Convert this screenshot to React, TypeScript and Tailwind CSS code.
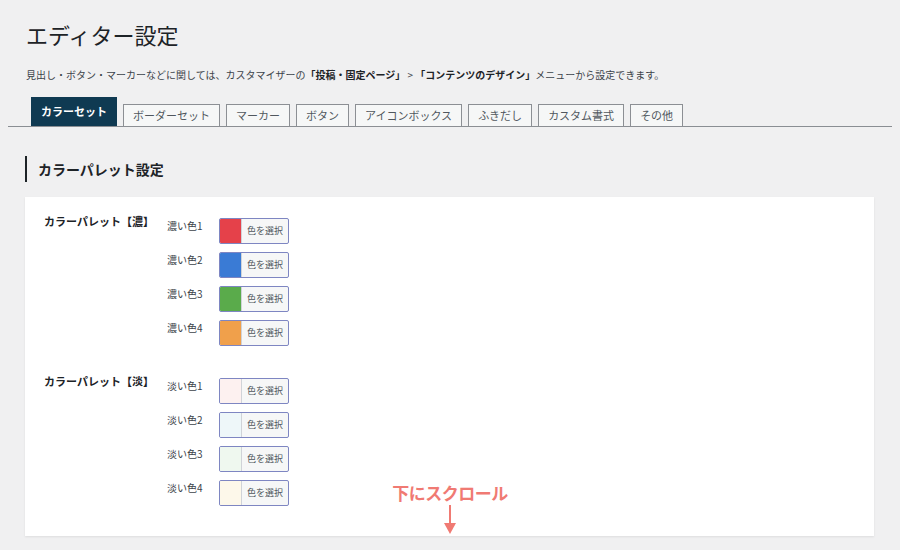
import React from "react";

const tabs = ["ボーダーセット", "マーカー", "ボタン", "アイコンボックス", "ふきだし", "カスタム書式", "その他"];

const dark = [
  { label: "濃い色1", color: "#e5414a" },
  { label: "濃い色2", color: "#3a7bd5" },
  { label: "濃い色3", color: "#5aab4b" },
  { label: "濃い色4", color: "#f0a04b" },
];
const light = [
  { label: "淡い色1", color: "#fdf1f0" },
  { label: "淡い色2", color: "#eef7f9" },
  { label: "淡い色3", color: "#eff8ef" },
  { label: "淡い色4", color: "#fdf8ea" },
];

function ColorRow({ label, color }: { label: string; color: string }) {
  return (
    <div className="flex items-start h-[34px]">
      <div className="w-[52px] pt-[1px] text-[10px] text-[#3c434a] leading-[14px]">{label}</div>
      <div className="flex h-[26px] w-[70px] border border-[#7e86c2] rounded-[2px] overflow-hidden bg-[#f6f7f7]">
        <div className="w-[22px] h-full border-r border-[#d0d3d8]" style={{ backgroundColor: color }} />
        <div className="flex-1 flex items-center justify-center text-[9px] text-[#50575e]">色を選択</div>
      </div>
    </div>
  );
}

function Group({ title, rows }: { title: string; rows: { label: string; color: string }[] }) {
  return (
    <div className="flex">
      <div className="w-[123px] text-[11px] font-bold text-[#1d2327] leading-[14px]">{title}</div>
      <div className="flex flex-col pt-[4px]">
        {rows.map((r) => (
          <ColorRow key={r.label} {...r} />
        ))}
      </div>
    </div>
  );
}

export default function App() {
  return (
    <div
      className="w-[900px] h-[550px] overflow-hidden bg-[#f0f0f1] relative"
      style={{ fontFamily: '"Noto Sans CJK JP", "Noto Sans", sans-serif' }}
    >
      <div className="pl-[26px] pt-[20px]">
        <h1 className="text-[22px] leading-[28px] text-[#1d2327] font-normal">エディター設定</h1>
        <p className="mt-[20px] text-[10px] leading-[14px] text-[#3c434a]">
          見出し・ボタン・マーカーなどに関しては、カスタマイザーの
          <span className="font-bold text-[#1d2327]">「投稿・固定ページ」</span> &gt;{" "}
          <span className="font-bold text-[#1d2327]">「コンテンツのデザイン」</span>メニューから設定できます。
        </p>
      </div>
      <div className="mx-[8px] mt-[15px] flex items-end gap-[6px] pl-[23px] border-b border-[#8a8e93] h-[30px]">
        <div className="h-[29px] w-[86px] bg-[#0f3a52] text-white text-[11px] font-bold flex items-center justify-center">
          カラーセット
        </div>
        {tabs.map((t) => (
          <div
            key={t}
            className="h-[23px] px-[9px] -mb-[1px] border border-[#8c8f94] bg-[#f6f7f7] text-[11px] text-[#50575e] flex items-center justify-center"
          >
            {t}
          </div>
        ))}
      </div>
      <div className="ml-[25px] mt-[29px] border-l-2 border-[#1d2327] pl-[11px] h-[26px] flex items-center">
        <h2 className="text-[14px] font-bold text-[#1d2327]">カラーパレット設定</h2>
      </div>
      <div className="ml-[25px] mt-[15px] w-[849px] h-[339px] bg-white shadow-[0_1px_2px_rgba(0,0,0,0.08)] pl-[19px] pt-[17px]">
        <Group title="カラーパレット【濃】" rows={dark} />
        <div className="h-[20px]" />
        <Group title="カラーパレット【淡】" rows={light} />
      </div>
      <div className="absolute left-[387px] top-[482px] flex flex-col items-center w-[126px]">
        <div className="text-[17px] font-bold text-[#f07a73] leading-[22px] tracking-[-0.5px]">下にスクロール</div>
        <svg width="14" height="30" viewBox="0 0 14 30" className="mt-[1px]">
          <line x1="7" y1="0" x2="7" y2="20" stroke="#f07a73" strokeWidth="2" />
          <polygon points="1,18 13,18 7,29" fill="#f07a73" />
        </svg>
      </div>
    </div>
  );
}
